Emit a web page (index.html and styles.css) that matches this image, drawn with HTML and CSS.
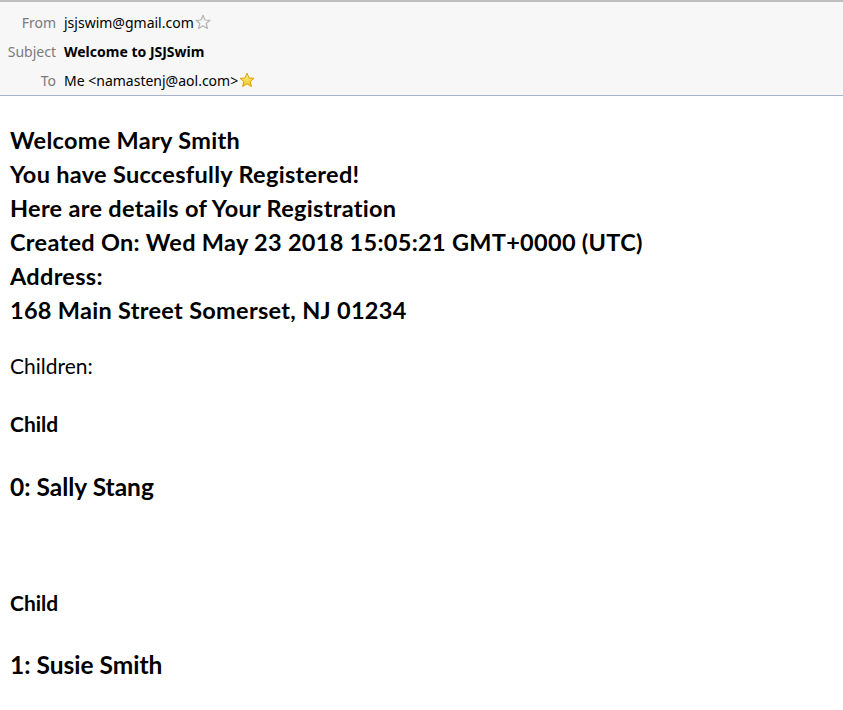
FILE: index.html
```html
<!DOCTYPE html>
<html>
<head>
<meta charset="utf-8">
<link rel="stylesheet" href="styles.css">
</head>
<body>
<div class="header">
  <div class="row"><span class="label">From</span><span class="value">jsjswim@gmail.com</span><svg class="star" width="16" height="16" viewBox="0 0 16 16"><path d="M8 1.2 L10 6 L15 6.3 L11.2 9.5 L12.4 14.5 L8 11.8 L3.6 14.5 L4.8 9.5 L1 6.3 L6 6 Z" fill="none" stroke="#b4b4b4" stroke-width="1.2" stroke-linejoin="round"/></svg></div>
  <div class="row"><span class="label">Subject</span><span class="value subject">Welcome to JSJSwim</span></div>
  <div class="row"><span class="label">To</span><span class="value">Me &lt;namastenj@aol.com&gt;</span><svg class="star" width="16" height="16" viewBox="0 0 16 16"><defs><linearGradient id="g" x1="0" y1="0" x2="0" y2="1"><stop offset="0" stop-color="#fff3a0"/><stop offset="1" stop-color="#f5c21b"/></linearGradient></defs><path d="M8 1.2 L10 6 L15 6.3 L11.2 9.5 L12.4 14.5 L8 11.8 L3.6 14.5 L4.8 9.5 L1 6.3 L6 6 Z" fill="url(#g)" stroke="#d9a200" stroke-width="1" stroke-linejoin="round"/></svg></div>
</div>
<div class="content">
  <div class="intro">
    <div>Welcome Mary Smith</div>
    <div>You have Succesfully Registered!</div>
    <div>Here are details of Your Registration</div>
    <div>Created On: Wed May 23 2018 15:05:21 GMT+0000 (UTC)</div>
    <div>Address:</div>
    <div>168 Main Street Somerset, NJ 01234</div>
  </div>
  <p class="children">Children:</p>
  <p class="child-label">Child</p>
  <p class="child-name">0: Sally Stang</p>
  <p class="child-label second">Child</p>
  <p class="child-name">1: Susie Smith</p>
</div>
</body>
</html>
```
FILE: styles.css
```css
html, body { margin: 0; padding: 0; background: #fff; }
body { font-family: "Lato", "Noto Sans", sans-serif; color: #000; }
.header {
  background: #f7f7f7;
  border-top: 2px solid #bfbfbf;
  border-bottom: 1px solid #a6b2c8;
  padding: 6px 0 0;
  font-family: "Noto Sans", "Open Sans", sans-serif;
  font-size: 14px;
}
.row { display: flex; align-items: center; height: 29px; }
.label { width: 56px; text-align: right; color: #7a7a7a; padding-right: 8px; box-sizing: content-box; }
.value { color: #000; }
.subject { font-weight: bold; }
.star { margin-left: 1px; margin-top: -2px; }
.content { padding: 27px 10px 0; }
.intro { font-weight: bold; font-size: 23.5px; letter-spacing: 0.3px; line-height: 34px; }
.children { font-size: 21px; margin: 22px 0 0; line-height: 34px; }
.child-label { font-size: 21px; font-weight: bold; margin: 24px 0 0; line-height: 34px; }
.child-name { font-size: 24.5px; font-weight: bold; margin: 29px 0 0; line-height: 34px; }
.child-label.second { margin-top: 82px; }
.child-name:last-child { margin-top: 28px; }
```
